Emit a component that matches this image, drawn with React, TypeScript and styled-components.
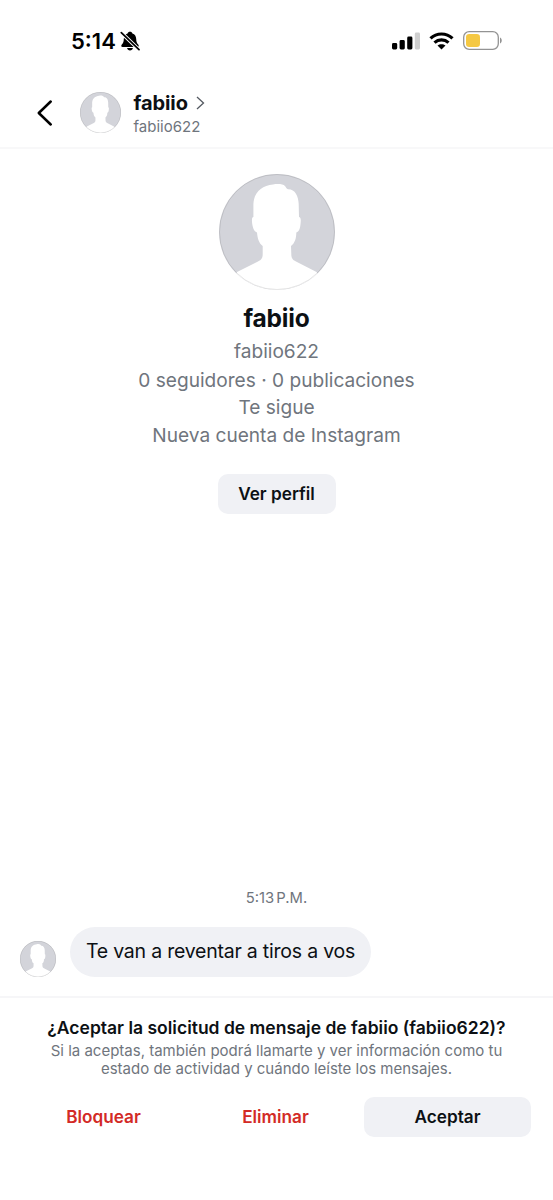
import React from 'react';
import styled, { createGlobalStyle, css } from 'styled-components';

const GlobalStyle = createGlobalStyle`
  *, *::before, *::after { box-sizing: border-box; }
  body {
    margin: 0;
    background: #fff;
    color: #0c1014;
    font-family: Inter, "Liberation Sans", sans-serif;
  }
  button { font: inherit; color: inherit; border: 0; background: none; padding: 0; margin: 0; }
`;

const Screen = styled.div`
  display: flex;
  flex-direction: column;
  width: 100%;
  height: 1200px;
  overflow: hidden;
  background: #fff;
`;

const StatusBar = styled.div`
  display: flex;
  align-items: center;
  justify-content: space-between;
  height: 78px;
  padding: 3px 51px 0 71px;
`;

const Clock = styled.div`
  display: flex;
  align-items: center;
  gap: 4px;
  font-size: 22px;
  font-weight: 600;
  line-height: 28px;
  color: #000;
`;

const StatusIcons = styled.div`
  display: flex;
  align-items: center;
  gap: 9px;
`;

const Header = styled.header`
  display: flex;
  align-items: center;
  height: 71px;
  padding: 0 37px;
  border-bottom: 2px solid #f8f8f9;
`;

const BackButton = styled.button`
  display: flex;
  width: 43px;
`;

const HeaderText = styled.div`
  display: flex;
  flex-direction: column;
  margin-left: 12.5px;
  padding-top: 3px;
`;

const HeaderName = styled.div`
  display: flex;
  align-items: center;
  gap: 8px;
`;

const Text = styled.span<{
  $size: number;
  $line: number;
  $weight?: number;
  $muted?: boolean;
  $tracking?: number;
}>`
  display: block;
  white-space: nowrap;
  font-size: ${(p) => p.$size}px;
  line-height: ${(p) => p.$line}px;
  font-weight: ${(p) => p.$weight ?? 400};
  letter-spacing: ${(p) => p.$tracking ?? 0}px;
  color: ${(p) => (p.$muted ? '#6f757d' : '#0c1014')};
`;

const AvatarSvg = styled.svg<{ $size: number }>`
  display: block;
  flex: none;
  width: ${(p) => p.$size}px;
  height: ${(p) => p.$size}px;
`;

const Profile = styled.section`
  display: flex;
  flex-direction: column;
  align-items: center;
  padding-top: 25px;
`;

const ProfileName = styled.div`
  display: flex;
  flex-direction: column;
  align-items: center;
  gap: 2px;
  margin: 12px 0 1.5px;
`;

const ProfileButton = styled.button`
  width: 118px;
  height: 40px;
  margin-top: 25px;
  border-radius: 10px;
  background: #f0f1f5;
  text-align: center;
`;

const Thread = styled.section`
  display: flex;
  flex: 1;
  flex-direction: column;
  justify-content: flex-end;
  padding: 0 20px 19px;
`;

const Timestamp = styled.div`
  display: flex;
  justify-content: center;
  margin-bottom: 19px;
  word-spacing: -2px;
`;

const MessageRow = styled.div`
  display: flex;
  align-items: flex-end;
  gap: 14px;
`;

const Bubble = styled.div`
  display: flex;
  align-items: center;
  justify-content: center;
  width: 301px;
  height: 50px;
  padding-bottom: 2px;
  border-radius: 25px;
  background: #f0f1f5;
`;

const RequestPanel = styled.footer`
  display: flex;
  flex-direction: column;
  align-items: center;
  height: 204px;
  padding: 18px 20px 0;
  border-top: 2px solid #f6f6f8;
`;

const Question = styled.div`
  margin-bottom: 2px;
`;

const Actions = styled.div`
  display: grid;
  grid-template-columns: repeat(3, 167px);
  gap: 5px;
  width: 100%;
  margin-top: 19px;
`;

const ActionButton = styled.button<{ $danger?: boolean }>`
  display: flex;
  align-items: center;
  justify-content: center;
  height: 40px;
  padding-bottom: 1px;
  border-radius: 10px;
  font-size: 17.2px;
  line-height: 21px;
  font-weight: 600;
  ${(p) =>
    p.$danger
      ? css`color: #d32a26;`
      : css`background: #f0f1f5;`}
`;

function Avatar({ size, id }: { size: number; id: string }) {
  return (
    <AvatarSvg $size={size} viewBox="0 0 116 116">
      <clipPath id={id}>
        <circle cx="58" cy="58" r="58" />
      </clipPath>
      <g clipPath={`url(#${id})`}>
        <rect width="116" height="116" fill="#d3d4da" />
        <path
          fill="#fff"
          d="M54 10.500C59 9.500 64 10 66 12C67 13 67.500 15 69 15.200C76 15 79.500 22 79.700 30L80 43C81.500 43 82 45 81.700 48C81.400 53 80.500 58 77.300 58.500C77.300 64 76 69 72 72L72.300 80C72.300 84 73.500 85.700 77 87.500L97.500 98L110 116H6L18 98L39 87.500C42.500 85.700 43.700 84 43.700 80V72C39.700 69 38.500 64 38 58.500C35 58 33.500 53 33 48C32.800 45 33 43 34.400 43V30C35 18 43 11.500 54 10.500Z"
        />
      </g>
      <circle cx="58" cy="58" r="57.500" fill="none" stroke="#000" strokeOpacity=".1" strokeWidth="1" vectorEffect="non-scaling-stroke" />
    </AvatarSvg>
  );
}

const BellOff = () => (
  <svg width="20" height="20" viewBox="0 0 20 20">
    <path
      d="M10 0.800C8.700 0.800 7.900 1.500 7.600 2.400C5 3.300 3.900 5.300 3.800 8C3.700 11 3.200 12 1.800 13.500C0.800 14.800 1.200 16 2.600 16H17.400C18.800 16 19.200 14.800 18.200 13.500C16.800 12 16.300 11 16.200 8C16.100 5.300 15 3.300 12.400 2.400C12.100 1.500 11.300 0.800 10 0.800ZM7.100 17C7.300 18.500 8.500 19.400 10 19.400S12.700 18.500 12.900 17Z"
      fill="#000"
    />
    <path d="M1.300 1.600L19 18.700" stroke="#fff" strokeWidth="3.600" />
    <path d="M1.300 1.600L19 18.700" stroke="#000" strokeWidth="1.700" strokeLinecap="round" />
  </svg>
);

const Signal = () => (
  <svg width="28" height="18" viewBox="0 0 28 18">
    <rect x="0" y="11" width="5.200" height="6.500" rx="1.400" />
    <rect x="7.600" y="8" width="5.200" height="9.500" rx="1.400" />
    <rect x="15.200" y="4.500" width="5.200" height="13" rx="1.400" />
    <rect x="22.800" y="0.500" width="5.200" height="17" rx="1.400" fill="#cfcfcf" />
  </svg>
);

const Wifi = () => (
  <svg width="25" height="18" viewBox="0 0 25 18">
    <g fill="none" stroke="#000" strokeWidth="3.200">
      <path d="M1.500 6.400C7.700 0.500 17.300 0.500 23.500 6.400" />
      <path d="M5.500 10.600C9.500 7 15.500 7 19.500 10.600" />
    </g>
    <path d="M8.500 13.600C10.800 11.700 14.200 11.700 16.500 13.600L12.500 17.600Z" />
  </svg>
);

const Battery = () => (
  <svg width="39" height="19" viewBox="0 0 39 19">
    <rect x="0.700" y="0.700" width="34.600" height="17.600" rx="5.500" fill="none" stroke="#939393" strokeWidth="1.300" />
    <rect x="3" y="3" width="14" height="13" rx="3.200" fill="#f5c842" />
    <path d="M37 6.500C39.300 7.300 39.300 11.700 37 12.500Z" fill="#939393" />
  </svg>
);

export default function App() {
  return (
    <Screen>
      <GlobalStyle />
      <StatusBar>
        <Clock>
          5:14
          <BellOff />
        </Clock>
        <StatusIcons>
          <Signal />
          <Wifi />
          <Battery />
        </StatusIcons>
      </StatusBar>

      <Header>
        <BackButton aria-label="Atrás">
          <svg width="16" height="26" viewBox="0 0 16 26" fill="none" stroke="#000" strokeWidth="2.500" strokeLinecap="round" strokeLinejoin="round">
            <path d="M13.700 1.500L1.800 13L13.700 24.500" />
          </svg>
        </BackButton>
        <Avatar size={41} id="header-avatar" />
        <HeaderText>
          <HeaderName>
            <Text $size={20} $line={25} $weight={700} $tracking={-0.1}>fabiio</Text>
            <svg width="9" height="15" viewBox="0 0 9 15" fill="none" stroke="#555a62" strokeWidth="1.300">
              <path d="M1 1L7.500 7L1 13" />
            </svg>
          </HeaderName>
          <Text $size={15} $line={21} $muted>fabiio622</Text>
        </HeaderText>
      </Header>

      <Profile>
        <Avatar size={116} id="profile-avatar" />
        <ProfileName>
          <Text $size={24.5} $line={33} $weight={700} $tracking={-0.2}>fabiio</Text>
          <Text $size={19.1} $line={28} $muted>fabiio622</Text>
        </ProfileName>
        <Text $size={19.1} $line={27.5} $muted>0 seguidores · 0 publicaciones</Text>
        <Text $size={19.1} $line={27.5} $muted>Te sigue</Text>
        <Text $size={19.1} $line={27.5} $muted>Nueva cuenta de Instagram</Text>
        <ProfileButton>
          <Text $size={17.2} $line={40} $weight={600}>Ver perfil</Text>
        </ProfileButton>
      </Profile>

      <Thread>
        <Timestamp>
          <Text $size={14.8} $line={20} $muted>5:13 P.M.</Text>
        </Timestamp>
        <MessageRow>
          <Avatar size={36} id="message-avatar" />
          <Bubble>
            <Text $size={19.5} $line={26} $tracking={-0.22}>Te van a reventar a tiros a vos</Text>
          </Bubble>
        </MessageRow>
      </Thread>

      <RequestPanel>
        <Question>
          <Text $size={17.5} $line={24} $weight={600}>¿Aceptar la solicitud de mensaje de fabiio (fabiio622)?</Text>
        </Question>
        <Text $size={15} $line={18} $muted>Si la aceptas, también podrá llamarte y ver información como tu</Text>
        <Text $size={15} $line={18} $muted>estado de actividad y cuándo leíste los mensajes.</Text>
        <Actions>
          <ActionButton $danger>Bloquear</ActionButton>
          <ActionButton $danger>Eliminar</ActionButton>
          <ActionButton>Aceptar</ActionButton>
        </Actions>
      </RequestPanel>
    </Screen>
  );
}
